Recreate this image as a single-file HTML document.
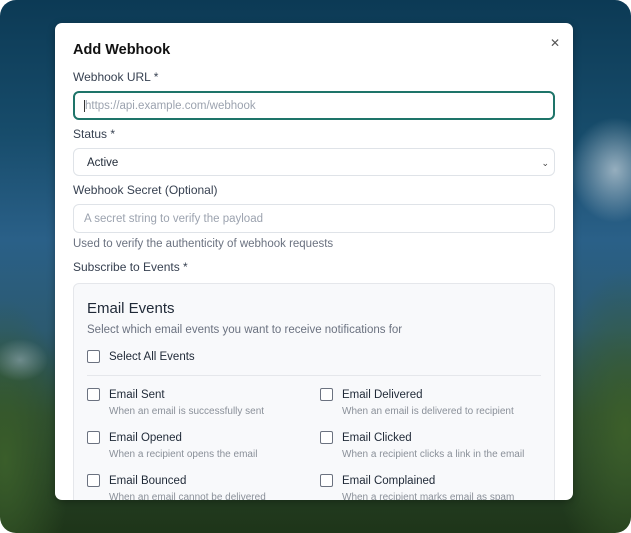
<!DOCTYPE html>
<html><head><style>
*{box-sizing:border-box;margin:0;padding:0}
html,body{width:631px;height:533px;overflow:hidden;background:#fff;font-family:"Liberation Sans",Arial,sans-serif}
.bg{position:absolute;left:0;top:0;width:631px;height:533px;border-radius:16px;overflow:hidden;
background:
radial-gradient(ellipse 60px 70px at 615px 170px,rgba(190,205,215,.75),rgba(200,212,222,0) 75%),
radial-gradient(ellipse 40px 30px at 20px 360px,rgba(170,190,205,.5),rgba(200,212,222,0) 70%),
radial-gradient(ellipse 90px 200px at 625px 430px,#3c5f2a,rgba(40,70,30,0) 80%),
radial-gradient(ellipse 80px 200px at 5px 460px,#3a5e2a,rgba(40,70,30,0) 80%),
linear-gradient(180deg,#0c3a55 0%,#174c6b 25%,#2a6088 45%,#2c5a70 62%,#2b4a30 78%,#1e3519 100%)}
.m{position:absolute;left:55px;top:23px;width:518px;height:477px;background:#fff;border-radius:7px;overflow:hidden;box-shadow:0 2px 8px rgba(0,0,0,.3)}
.a{position:absolute;white-space:nowrap;color:#1f2937}
.t{left:18px;top:19px;font-size:14.5px;font-weight:bold;color:#111}
.x{left:495px;top:13px;font-size:12px;color:#555}
.l{font-size:12px;color:#374151}
.in{position:absolute;left:18px;width:482px;border:1px solid #dfe3e8;border-radius:6px;font-size:11.5px;color:#9ca3af;padding-left:10px}
.cb{position:absolute;width:13px;height:13px;border:1.3px solid #6b7280;border-radius:2px;background:#fff}
.n{font-size:11.5px;color:#1f2937}
.d{font-size:10px;color:#8a9099}
</style></head><body>
<div class="bg"></div>
<div class="m">
<div class="a t">Add Webhook</div>
<div class="a x">✕</div>
<div class="a l" style="left:18px;top:47px">Webhook URL *</div>
<div class="in" style="top:68px;height:29px;border:2px solid #1e7469;line-height:27px;padding-left:9px"><span style="border-left:1px solid #333;padding-left:0">https://api.example.com/webhook</span></div>
<div class="a l" style="left:18px;top:104px">Status *</div>
<div class="in" style="top:125px;height:28px;line-height:28px;color:#1f2937;padding-left:13px;font-size:11.5px">Active<span style="position:absolute;right:5px;top:0;font-size:9px;color:#444">&#8964;</span></div>
<div class="a l" style="left:18px;top:160px">Webhook Secret (Optional)</div>
<div class="in" style="top:181px;height:29px;line-height:28px">A secret string to verify the payload</div>
<div class="a" style="left:18px;top:215px;font-size:11.5px;color:#6b7280">Used to verify the authenticity of webhook requests</div>
<div class="a l" style="left:18px;top:237px">Subscribe to Events *</div>
<div style="position:absolute;left:18px;top:260px;width:482px;height:240px;background:#f8f9fb;border:1px solid #e5e7eb;border-radius:6px">
<div class="a" style="left:13px;top:16px;font-size:15px;color:#1f2937">Email Events</div>
<div class="a" style="left:13px;top:40px;font-size:11.5px;color:#6b7280">Select which email events you want to receive notifications for</div>
<div class="cb" style="left:13px;top:66px"></div><div class="a n" style="left:35px;top:67px">Select All Events</div>
<div style="position:absolute;left:13px;right:13px;top:91px;border-top:1px solid #e5e7eb"></div>
<div class="cb" style="left:13px;top:104px"></div><div class="a n" style="left:35px;top:105px">Email Sent</div><div class="a d" style="left:35px;top:122px">When an email is successfully sent</div>
<div class="cb" style="left:246px;top:104px"></div><div class="a n" style="left:268px;top:105px">Email Delivered</div><div class="a d" style="left:268px;top:122px">When an email is delivered to recipient</div>
<div class="cb" style="left:13px;top:147px"></div><div class="a n" style="left:35px;top:148px">Email Opened</div><div class="a d" style="left:35px;top:165px">When a recipient opens the email</div>
<div class="cb" style="left:246px;top:147px"></div><div class="a n" style="left:268px;top:148px">Email Clicked</div><div class="a d" style="left:268px;top:165px">When a recipient clicks a link in the email</div>
<div class="cb" style="left:13px;top:190px"></div><div class="a n" style="left:35px;top:191px">Email Bounced</div><div class="a d" style="left:35px;top:208px">When an email cannot be delivered</div>
<div class="cb" style="left:246px;top:190px"></div><div class="a n" style="left:268px;top:191px">Email Complained</div><div class="a d" style="left:268px;top:208px">When a recipient marks email as spam</div>
</div>
</div>
</body></html>
